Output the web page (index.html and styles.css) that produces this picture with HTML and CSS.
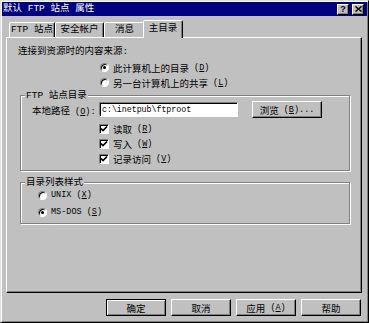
FILE: index.html
```html
<!DOCTYPE html>
<html lang="zh-CN">
<head>
    <meta charset="UTF-8">
    <meta name="viewport" content="width=device-width, initial-scale=1.0">
    <title>默认 FTP 站点 属性</title>
    <link rel="stylesheet" href="styles.css">
</head>
<body>
    <div class="window">
        <div class="titlebar">
            <span class="title">默认 FTP 站点 属性</span>
            <div class="caption-btns">
                <span class="cap-btn help">?</span>
                <span class="cap-btn close">
                    <svg width="7" height="6" viewBox="0 0 7 6"><path d="M0.5 0.5 L6.5 5.5 M6.5 0.5 L0.5 5.5" stroke="#000" stroke-width="1.5"/></svg>
                </span>
            </div>
        </div>

        <div class="content">
            <!-- Tabs -->
            <div class="tabs">
                <div class="tab t1">FTP 站点</div>
                <div class="tab t2">安全帐户</div>
                <div class="tab t3">消息</div>
                <div class="tab t4 active">主目录</div>
            </div>

            <div class="panel">
                <div class="source-label">连接到资源时的内容来源:</div>
                <div class="option-list">
                    <div class="opt"><span class="radio on"></span>此计算机上的目录<span class="key"> (<u>D</u>)</span></div>
                    <div class="opt"><span class="radio"></span>另一台计算机上的共享<span class="key"> (<u>L</u>)</span></div>
                </div>

                <!-- FTP site directory -->
                <fieldset class="group">
                    <legend>FTP 站点目录</legend>
                    <div class="path-row">
                        <span class="path-label">本地路径<span class="key"> (<u>O</u>):</span></span>
                        <span class="field">c:\inetpub\ftproot</span>
                        <span class="btn browse">浏览<span class="key"> (<u>B</u>)...</span></span>
                    </div>
                    <div class="check-list">
                        <div class="opt"><span class="check"><svg width="8" height="8" viewBox="0 0 8 8"><path d="M1 3.5 L3 5.5 L7 1.5" fill="none" stroke="#000" stroke-width="1.7"/></svg></span>读取<span class="key"> (<u>R</u>)</span></div>
                        <div class="opt"><span class="check"><svg width="8" height="8" viewBox="0 0 8 8"><path d="M1 3.5 L3 5.5 L7 1.5" fill="none" stroke="#000" stroke-width="1.7"/></svg></span>写入<span class="key"> (<u>W</u>)</span></div>
                        <div class="opt"><span class="check"><svg width="8" height="8" viewBox="0 0 8 8"><path d="M1 3.5 L3 5.5 L7 1.5" fill="none" stroke="#000" stroke-width="1.7"/></svg></span>记录访问<span class="key"> (<u>V</u>)</span></div>
                    </div>
                </fieldset>

                <!-- Directory listing style -->
                <fieldset class="group group-list">
                    <legend>目录列表样式</legend>
                    <div class="radio-list">
                        <div class="opt"><span class="radio"></span><span class="key">UNIX (<u>X</u>)</span></div>
                        <div class="opt"><span class="radio on"></span><span class="key">MS-DOS (<u>S</u>)</span></div>
                    </div>
                </fieldset>
            </div>

            <div class="actions">
                <span class="btn default">确定</span>
                <span class="btn">取消</span>
                <span class="btn">应用<span class="key"> (<u>A</u>)</span></span>
                <span class="btn">帮助</span>
            </div>
        </div>
    </div>
</body>
</html>
```

FILE: styles.css
```css
* {
    box-sizing: border-box;
}
body {
    margin: 0;
    background: #c0c0c0;
    font-family: "Liberation Mono", "Noto Sans CJK SC", monospace;
    font-size: 9.5px;
    color: #000;
}
u {
    text-underline-offset: 1px;
}
.key {
    font-family: "Liberation Mono", monospace;
    font-size: 8.5px;
    white-space: pre;
}
.window {
    width: 369px;
    height: 323px;
    padding: 1px;
    background: #c0c0c0;
    border: 1px solid;
    border-color: #dfdfdf #000 #000 #dfdfdf;
    box-shadow: inset 1px 1px #fff, inset -1px -1px #808080;
    display: flex;
    flex-direction: column;
}
.titlebar {
    height: 14px;
    background: #000080;
    color: #fff;
    display: flex;
    align-items: center;
    justify-content: space-between;
    padding: 0 3px 0 1px;
}
.title {
    line-height: 14px;
}
.caption-btns {
    display: flex;
    gap: 3px;
}
.cap-btn {
    width: 12px;
    height: 11px;
    background: #c0c0c0;
    border: 1px solid;
    border-color: #fff #000 #000 #fff;
    box-shadow: inset -1px -1px #808080;
    display: flex;
    align-items: center;
    justify-content: center;
}
.cap-btn.help {
    font-family: "Liberation Sans", sans-serif;
    font-weight: bold;
    font-size: 9px;
    color: #000;
    line-height: 9px;
}
.content {
    flex: 1;
    padding: 4px 5px 0 4px;
    display: flex;
    flex-direction: column;
}

/* tabs */
.tabs {
    display: flex;
    align-items: flex-end;
    padding-left: 3px;
}
.tab {
    height: 15px;
    line-height: 13px;
    text-align: center;
    white-space: nowrap;
    background: #c0c0c0;
    border: 1px solid;
    border-bottom: none;
    border-color: #fff #000 transparent #fff;
    box-shadow: inset -1px 0 #808080;
    border-radius: 2px 2px 0 0;
}
.t1 { width: 46px; }
.t2 { width: 49px; }
.t3 { width: 41px; }
.tab.active {
    width: 40px;
    height: 18px;
    line-height: 15px;
    margin: 0 -2px -1px -2px;
    position: relative;
    z-index: 1;
}
.panel {
    height: 256px;
    border: 1px solid;
    border-color: #fff #000 #000 #fff;
    box-shadow: inset -1px -1px #808080;
    padding: 7px 11px 0 11px;
}
.source-label {
    line-height: 14px;
}
.option-list {
    margin: 1px 0 0 82px;
}
.opt {
    display: flex;
    align-items: center;
    height: 15px;
    white-space: nowrap;
}

/* radios and checks */
.radio {
    width: 9px;
    height: 9px;
    margin-right: 4px;
    border-radius: 50%;
    background: #fff;
    border: 1px solid;
    border-color: #808080 #fff #fff #808080;
    box-shadow: inset 1px 1px #000;
    display: flex;
    align-items: center;
    justify-content: center;
    flex-shrink: 0;
}
.radio.on::after {
    content: "";
    width: 3px;
    height: 3px;
    border-radius: 50%;
    background: #000;
}
.check {
    width: 10px;
    height: 10px;
    margin-right: 4px;
    background: #fff;
    border: 1px solid;
    border-color: #808080 #fff #fff #808080;
    box-shadow: inset 1px 1px #000;
    display: flex;
    align-items: center;
    justify-content: center;
    flex-shrink: 0;
}
.check svg {
    display: block;
}

/* group boxes */
.group {
    margin: 0 0 0 2px;
    padding: 0 10px 4px 3px;
    min-width: 0;
    border: 1px solid #808080;
    box-shadow: inset 1px 1px #fff, 1px 1px #fff;
}
.group legend {
    padding: 0 1px;
    margin-left: 1px;
    line-height: 11px;
    background: #c0c0c0;
}
.path-row {
    display: flex;
    align-items: center;
    height: 17px;
    margin-left: 8px;
}
.path-label {
    width: 67px;
    white-space: nowrap;
}
.field {
    width: 139px;
    height: 15px;
    line-height: 13px;
    padding-left: 2px;
    font-size: 8.25px;
    background: #fff;
    border: 1px solid;
    border-color: #808080 #fff #fff #808080;
    box-shadow: inset 1px 1px #000;
}
.check-list {
    margin: 3px 0 0 75px;
}
.group-list {
    margin-top: 6px;
}
.radio-list {
    margin-left: 14px;
}
.radio-list .opt {
    height: 14px;
}
.radio-list .opt + .opt {
    margin-top: 3px;
}

/* buttons */
.btn {
    width: 60px;
    height: 17px;
    display: flex;
    align-items: center;
    justify-content: center;
    white-space: nowrap;
    background: #c0c0c0;
    border: 1px solid;
    border-color: #fff #000 #000 #fff;
    box-shadow: inset -1px -1px #808080;
}
.btn.default {
    border-color: #000;
    box-shadow: inset 1px 1px #fff, inset -1px -1px #808080;
}
.browse {
    width: 70px;
    margin-left: 14px;
}
.actions {
    display: flex;
    justify-content: flex-end;
    gap: 5px;
    margin: 6px 1px 0 0;
}
```
